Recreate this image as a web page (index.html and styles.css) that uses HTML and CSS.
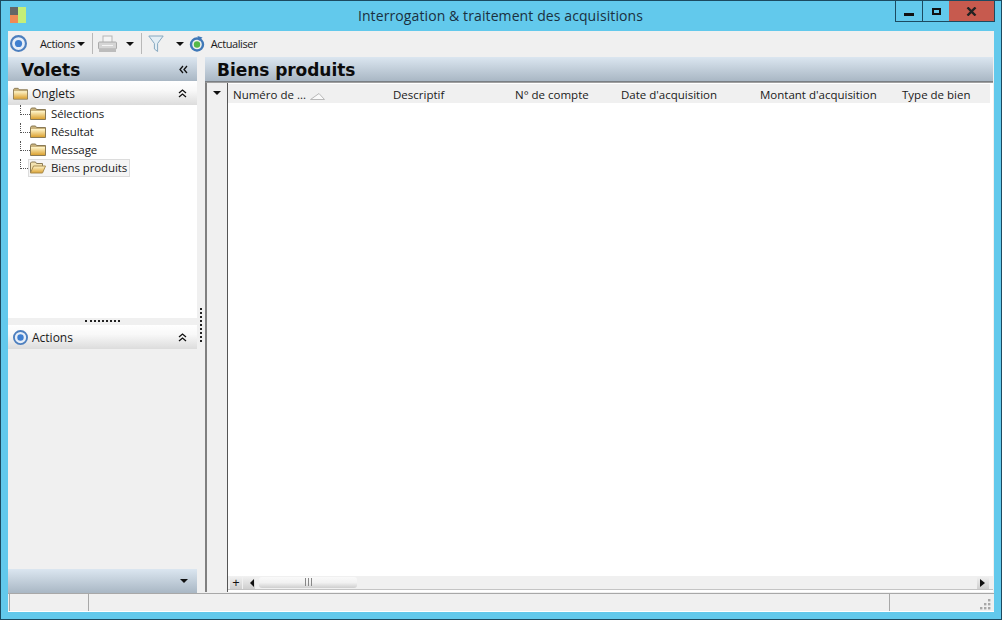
FILE: index.html
```html
<!DOCTYPE html>
<html lang="fr">
<head>
<meta charset="utf-8">
<title>Interrogation &amp; traitement des acquisitions</title>
<link rel="stylesheet" href="styles.css">
</head>
<body>
<svg class="defs" width="0" height="0">
  <defs>
    <linearGradient id="fold" x1="0" y1="0" x2="0" y2="1">
      <stop offset="0" stop-color="#fff6cc"/>
      <stop offset="1" stop-color="#dca232"/>
    </linearGradient>
    <symbol id="folder" viewBox="0 0 16 13">
      <path d="M.5 2.5 1.5 1h4l1 1.5h9v10H.5z" fill="#c9b27c" stroke="#8a7a55"/>
      <rect x="1" y="4" width="14" height="8" fill="url(#fold)"/>
    </symbol>
    <symbol id="target" viewBox="0 0 16 16">
      <circle cx="8" cy="8" r="7" fill="#e6eef8" stroke="#4d7fbe" stroke-width="2"/>
      <circle cx="8" cy="8" r="3.4" fill="#3f7fd0"/>
    </symbol>
    <symbol id="dbl-up" viewBox="0 0 9 9">
      <path d="M1 4 4.5 1 8 4M1 8 4.5 5 8 8" fill="none" stroke="#111" stroke-width="1.3"/>
    </symbol>
  </defs>
</svg>
<div class="window">
  <header class="titlebar">
    <svg class="app-icon" width="16" height="16" viewBox="0 0 16 16">
      <rect x="0" y="0" width="8" height="8" fill="#666"/>
      <rect x="0" y="8" width="8" height="8" fill="#f08a55"/>
      <rect x="8" y="0" width="8" height="16" fill="#c4ee78"/>
    </svg>
    <h1 class="title">Interrogation &amp; traitement des acquisitions</h1>
    <div class="controls">
      <button class="ctl"><span class="ctl-min"></span></button>
      <button class="ctl"><span class="ctl-max"></span></button>
      <button class="ctl ctl-close"><svg width="11" height="9" viewBox="0 0 11 9"><path d="M1.5 .5 9.5 8.5M9.5 .5 1.5 8.5" stroke="#222" stroke-width="2.4" fill="none"/></svg></button>
    </div>
  </header>

  <div class="client">
    <div class="toolbar">
      <svg class="tb-target" width="17" height="17"><use href="#target"/></svg>
      <span class="tb-actions">Actions</span><span class="caret caret-actions"></span>
      <span class="sep sep-1"></span>
      <svg class="tb-print" width="19" height="18" viewBox="0 0 19 18">
        <rect x="5" y="1" width="9" height="7" fill="#f4f4f4" stroke="#b5b5b5"/>
        <rect x=".5" y="7" width="18" height="7" rx="1" fill="#d5d5d5" stroke="#aaa"/>
        <rect x="1" y="14" width="17" height="3" fill="#bcbcbc"/>
        <rect x="4" y="10" width="11" height="1" fill="#f5f5f5"/>
      </svg>
      <span class="caret caret-print"></span>
      <span class="sep sep-2"></span>
      <svg class="tb-filter" width="16" height="18" viewBox="0 0 16 18">
        <path d="M.8 1h14.4L9.6 8.5V16.5L6.4 14V8.5z" fill="#e3eef5" stroke="#86a8c0"/>
      </svg>
      <span class="caret caret-filter"></span>
      <svg class="tb-refresh" width="16" height="16" viewBox="0 0 16 16">
        <circle cx="8" cy="8.5" r="6" fill="none" stroke="#3f78b8" stroke-width="2.4"/>
        <circle cx="8" cy="8.5" r="3.2" fill="#55b848"/>
        <path d="M8.5 0 13.5 1.5 10 5z" fill="#3f78b8"/>
      </svg>
      <span class="tb-label">Actualiser</span>
    </div>

    <div class="main">
      <aside class="left">
        <div class="pane-head">
          <span class="pane-title">Volets</span>
          <svg class="chev-left" width="9" height="9" viewBox="0 0 9 9"><path d="M4 1 1 4.5 4 8M8 1 5 4.5 8 8" fill="none" stroke="#111" stroke-width="1.3"/></svg>
        </div>
        <div class="section-head">
          <svg class="sec-icon" width="15" height="13"><use href="#folder"/></svg>
          <span class="sec-label">Onglets</span>
          <svg class="dbl" width="9" height="9"><use href="#dbl-up"/></svg>
        </div>
        <ul class="tree">
          <li class="node"><span class="dots"></span><svg width="16" height="13"><use href="#folder"/></svg><span class="node-label">Sélections</span></li>
          <li class="node"><span class="dots"></span><svg width="16" height="13"><use href="#folder"/></svg><span class="node-label">Résultat</span></li>
          <li class="node"><span class="dots"></span><svg width="16" height="13"><use href="#folder"/></svg><span class="node-label">Message</span></li>
          <li class="node"><span class="dots"></span>
            <span class="sel-box">
              <svg width="16" height="13" viewBox="0 0 16 13"><path d="M.5 12V2L1.5 1h4l1 1.5h6V5" fill="#f2e2b0" stroke="#8a7a55"/><path d="M.5 12 3.5 5h12l-3 7z" fill="url(#fold)" stroke="#a98c4e"/></svg>
              <span class="node-label">Biens produits</span>
            </span></li>
        </ul>
        <div class="h-split"><span class="grip"></span></div>
        <div class="section-head">
          <svg class="sec-icon" width="15" height="15"><use href="#target"/></svg>
          <span class="sec-label">Actions</span>
          <svg class="dbl" width="9" height="9"><use href="#dbl-up"/></svg>
        </div>
        <div class="left-fill"></div>
        <div class="pane-foot"><span class="caret"></span></div>
      </aside>

      <div class="v-split"><span class="v-grip"></span></div>

      <section class="right">
        <div class="pane-head pane-head-right">
          <span class="pane-title">Biens produits</span>
        </div>
        <div class="grid">
          <div class="row-col">
            <div class="row-col-head"><span class="caret"></span></div>
          </div>
          <div class="grid-body">
            <div class="col-heads">
              <div class="col col-1"><span>Numéro de ...</span>
                <svg class="sort" width="15" height="7" viewBox="0 0 15 7"><path d="M.5 6.5 9 .5 14.5 6.5z" fill="#fafafa" stroke="#b9b9b9"/></svg></div>
              <div class="col col-2">Descriptif</div>
              <div class="col col-3">N° de compte</div>
              <div class="col col-4">Date d'acquisition</div>
              <div class="col col-5">Montant d'acquisition</div>
              <div class="col col-6">Type de bien</div>
            </div>
            <div class="rows"></div>
            <div class="hscroll">
              <span class="plus">+</span>
              <span class="arrow"><span class="tri-left"></span></span>
              <div class="track">
                <div class="thumb"><span class="thumb-grip"></span></div>
              </div>
              <span class="arrow arrow-right"><span class="tri-right"></span></span>
            </div>
          </div>
        </div>
      </section>
    </div>

    <footer class="status">
      <div class="st st-1"></div>
      <div class="st st-2"></div>
      <div class="st st-3">
        <svg width="11" height="11" viewBox="0 0 11 11" fill="#a8a8a8"><rect x="8" y="0" width="2.4" height="2.4"/><rect x="4" y="4" width="2.4" height="2.4"/><rect x="8" y="4" width="2.4" height="2.4"/><rect x="0" y="8" width="2.4" height="2.4"/><rect x="4" y="8" width="2.4" height="2.4"/><rect x="8" y="8" width="2.4" height="2.4"/></svg>
      </div>
    </footer>
  </div>
</div>
</body>
</html>
```
FILE: styles.css
```css
* { box-sizing: border-box; }
html, body { margin: 0; padding: 0; }
body { width: 1002px; height: 620px; overflow: hidden; font-family: "Open Sans", "Noto Sans", sans-serif; font-size: 11.5px; color: #1a1a1a; }
.defs { display: block; height: 0; }

.window { width: 1002px; height: 620px; display: flex; flex-direction: column; background: #62c9ec; border: 1px solid #1c4a60; }

.titlebar { height: 30px; flex: none; display: flex; align-items: flex-start; }
.app-icon { margin: 6px 0 0 9px; flex: none; }
.title { flex: 1; margin: 5px 0 0; padding-left: 80px; text-align: center; font-weight: 400; font-size: 14px; letter-spacing: .1px; line-height: 20px; color: #1a3040; }
.controls { flex: none; display: flex; height: 21px; margin-right: 6px; width: 100px; border: 1px solid #1c4a60; border-top: 0; }
.ctl { flex: 1 1 0; border: 0; padding: 0; background: transparent; display: flex; align-items: center; justify-content: center; }
.ctl:first-child { border-right: 1px solid #1c4a60; }
.ctl-close { flex: 0 0 45px; background: #c75a4e; }
.ctl-min { display: block; width: 10px; height: 3px; background: #111; margin-top: 6px; }
.ctl-max { display: block; width: 9px; height: 7px; border: 2px solid #111; }

.client { flex: 1; min-height: 0; margin: 0 7px 7px 7px; background: #f0f0f0; display: flex; flex-direction: column; }

.toolbar { height: 26px; flex: none; display: flex; align-items: center; padding-bottom: 1px; background: #f0f0f0; }
.tb-target { margin-left: 2px; flex: none; }
.tb-actions { margin-left: 13px; font-size: 11px; letter-spacing: -.4px; }
.caret { display: inline-block; width: 0; height: 0; border-left: 4px solid transparent; border-right: 4px solid transparent; border-top: 4px solid #111; flex: none; }
.caret-actions { margin-left: 2px; }
.sep { width: 1px; height: 21px; background: #b8b8b8; flex: none; }
.sep-1 { margin-left: 7px; }
.tb-print { margin-left: 5px; flex: none; }
.caret-print { margin-left: 9px; }
.sep-2 { margin-left: 7px; }
.tb-filter { margin-left: 6px; flex: none; }
.caret-filter { margin-left: 12px; }
.tb-refresh { margin-left: 5px; flex: none; }
.tb-label { margin-left: 6px; font-size: 11px; letter-spacing: -.4px; }

.main { flex: 1; min-height: 0; display: flex; }
.left { width: 189px; flex: none; display: flex; flex-direction: column; }
.v-split { width: 8px; flex: none; display: flex; align-items: flex-start; justify-content: flex-end; }
.v-grip { width: 2px; height: 34px; margin-top: 251px; margin-right: 3px; border-left: 2px dotted #222; }
.right { flex: 1; min-width: 0; display: flex; flex-direction: column; padding-bottom: 1px; padding-right: 1px; }

.pane-head { height: 24px; flex: none; display: flex; align-items: center; justify-content: space-between; padding: 0 9px 0 13px; background: linear-gradient(#dbe6f0, #a9b7c4); }
.pane-title { margin-top: 2px; font-family: "DejaVu Sans", sans-serif; font-weight: 700; font-size: 17px; letter-spacing: -.05px; line-height: 24px; color: #0c0c0c; }
.pane-head-right { height: 25px; padding-left: 12px; border-bottom: 1px solid #7a7f84; }

.section-head { height: 24px; flex: none; display: flex; align-items: center; padding: 0 10px 0 5px; background: linear-gradient(#fff 0, #f8f8f8 40%, #dcdcdc 100%); }
.sec-icon { flex: none; }
.sec-label { flex: 1; margin-left: 4px; font-size: 12px; }
.dbl { flex: none; }

.tree { margin: 0; padding: 0; list-style: none; height: 213px; flex: none; background: #fff; }
.node { height: 18px; display: flex; align-items: center; padding-left: 12px; position: relative; }
.node svg { flex: none; margin-bottom: 2px; }
.dots { width: 10px; flex: none; border-top: 1px dotted #555; }
.node::before { content: ""; position: absolute; left: 12px; top: 0; height: 10px; border-left: 1px dotted #555; }
.node-label { margin: 0 0 2px 3px; line-height: 17px; padding: 0 2px; letter-spacing: -.1px; }
.sel-box { display: flex; align-items: center; height: 18px; margin-left: -2px; padding-left: 1px; border: 1px solid #dcdcdc; background: #f5f5f5; }

.h-split { height: 7px; flex: none; display: flex; align-items: flex-start; justify-content: center; background: #f0f0f0; }
.grip { width: 35px; margin-top: 2px; border-top: 2px dotted #222; }
.left-fill { flex: 1; background: #f0f0f0; }
.pane-foot { height: 24px; flex: none; display: flex; align-items: center; justify-content: flex-end; padding-right: 9px; background: linear-gradient(#dbe6f0, #a9b7c4); }

.grid { flex: 1; min-height: 0; display: flex; border-left: 2px solid #808080; background: #f0f0f0; border-top: 1px solid #a0a0a0; }
.row-col { width: 21px; flex: none; background: #f0f0f0; border-right: 1px solid #555; }
.row-col-head { height: 20px; display: flex; align-items: center; justify-content: center; padding-right: 1px; }
.grid-body { flex: 1; min-width: 0; display: flex; flex-direction: column; background: #fff; border-top: 1px solid #fff; }
.col-heads { height: 19px; flex: none; display: flex; align-items: center; background: #f0f0f0; margin-right: 3px; padding-top: 2px; }
.col { flex: none; padding-left: 5px; white-space: nowrap; line-height: 17px; }
.col-1 { width: 160px; display: flex; align-items: center; }
.col-2 { width: 122px; }
.col-3 { width: 106px; }
.col-4 { width: 139px; }
.col-5 { width: 142px; }
.col-6 { flex: 1; }
.sort { margin-left: 4px; margin-top: 4px; }
.rows { flex: 1; min-height: 0; }
.hscroll { height: 14px; flex: none; margin-bottom: 2px; display: flex; align-items: stretch; background: #f0f0f0; border-bottom: 1px solid #c4c4c4; }
.plus { width: 12px; flex: none; margin-left: 2px; text-align: center; line-height: 13px; font-size: 13px; color: #111; background: linear-gradient(#f2f2f2, #cfcfcf); }
.arrow { width: 12px; flex: none; margin-left: 1px; display: flex; align-items: center; justify-content: flex-end; padding-right: 1px; background: linear-gradient(#f2f2f2, #cfcfcf); }
.arrow-right { justify-content: flex-start; margin-left: 0; margin-right: 4px; padding-left: 3px; padding-right: 0; }
.tri-left { width: 0; height: 0; border-top: 4px solid transparent; border-bottom: 4px solid transparent; border-right: 4px solid #111; }
.tri-right { width: 0; height: 0; border-top: 4px solid transparent; border-bottom: 4px solid transparent; border-left: 5px solid #111; }
.track { flex: 1; min-width: 0; padding: 1px 0 1px 4px; }
.thumb { width: 98px; height: 11px; border-radius: 3px; background: linear-gradient(#fafafa 0, #f2f2f2 50%, #cfcfcf 100%); display: flex; justify-content: center; }
.thumb-grip { width: 7px; height: 8px; margin-top: 1px; border-left: 1px solid #888; border-right: 1px solid #888; background: linear-gradient(90deg, transparent 2px, #888 2px, #888 3px, transparent 3px); }

.status { height: 19px; flex: none; display: flex; background: #f0f0f0; border-top: 1px solid #a8a8a8; border-bottom: 1px solid #fff; }
.st { height: 100%; border-left: 1px solid #a8a8a8; }
.st-1 { width: 79px; margin-left: 1px; }
.st-2 { width: 801px; }
.st-3 { flex: 1; display: flex; align-items: flex-end; justify-content: flex-end; padding: 0 3px 1px 0; }
```
